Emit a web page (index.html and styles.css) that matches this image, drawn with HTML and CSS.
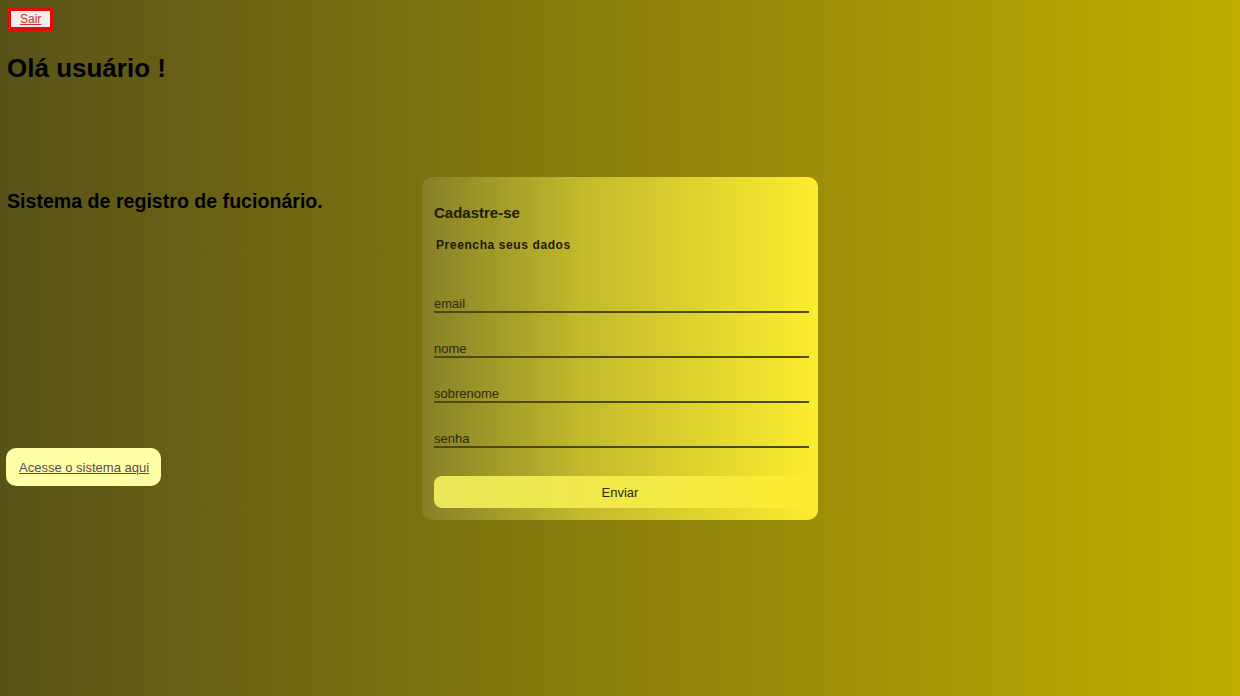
FILE: index.html
```html
<!DOCTYPE html>
<html lang="pt-BR">
<head>
<meta charset="utf-8">
<title>Sistema de registro</title>
<link rel="stylesheet" href="styles.css">
</head>
<body>
<div class="page">
  <div class="side">
    <div class="logout"><a href="#" class="logout-link">Sair</a></div>
    <h2 class="greet">Olá usuário !</h2>
    <h3 class="system">Sistema de registro de fucionário.</h3>
    <div class="access"><a href="#" class="access-link">Acesse o sistema aqui</a></div>
  </div>
  <form class="card">
    <h4 class="card-title">Cadastre-se</h4>
    <p class="card-sub">Preencha seus dados</p>
    <input class="field" type="text" placeholder="email">
    <input class="field" type="text" placeholder="nome">
    <input class="field" type="text" placeholder="sobrenome">
    <input class="field" type="password" placeholder="senha">
    <button class="send" type="button">Enviar</button>
  </form>
</div>
</body>
</html>
```
FILE: styles.css
```css
html, body {
  margin: 0;
  height: 100%;
}
body {
  background: linear-gradient(to right, #585218, #bfae00);
  font-family: "Liberation Sans", Arial, sans-serif;
  color: #000;
}
.page {
  display: grid;
  min-height: 100vh;
  box-sizing: border-box;
  padding: 7px;
}
.side, .card {
  grid-area: 1 / 1;
}
.side {
  display: flex;
  flex-direction: column;
  align-items: flex-start;
}
.logout {
  border: 4px solid #e30c0c;
  background: #f3eeee;
  padding: 0 9px;
  height: 16px;
  display: flex;
  align-items: center;
}
.logout-link {
  color: #d23030;
  font-size: 12px;
  line-height: 16px;
}
.greet {
  font-size: 26px;
  margin: 22px 0 0;
  line-height: 30px;
}
.system {
  font-size: 19.6px;
  margin: 106px 0 0;
  line-height: 24px;
}
.access {
  margin-top: 235px;
  margin-left: -1px;
  background: #ffffa6;
  border-radius: 10px;
  padding: 12px 12px 12px 13px;
  height: 14px;
  display: flex;
  align-items: center;
}
.access-link {
  color: #5b4a64;
  font-size: 13px;
}
.card {
  place-self: center;
  width: 396px;
  height: 343px;
  box-sizing: border-box;
  border-radius: 10px;
  padding: 27px 9px 0 12px;
  background: linear-gradient(to right, #858028, #c2b92c 40%, #e3d82e 75%, #fdec2e);
  display: flex;
  flex-direction: column;
  margin-top: 1px;
}
.card-title {
  margin: 0;
  font-size: 15px;
  line-height: 17px;
  color: #1d1a08;
}
.card-sub {
  margin: 17px 0 0 2px;
  font-size: 12px;
  font-weight: bold;
  letter-spacing: 0.6px;
  color: #1d1a08;
  line-height: 15px;
}
.field {
  width: 375px;
  box-sizing: border-box;
  background: transparent;
  border: none;
  border-bottom: 2px solid #4d4a06;
  padding: 0;
  height: 18px;
  font-family: "Liberation Sans", Arial, sans-serif;
  font-size: 13px;
  color: #2d2a0a;
  outline: none;
  margin-top: 27px;
}
.field:first-of-type {
  margin-top: 42px;
}
.field::placeholder {
  color: #2e2b0c;
}
.send {
  margin-top: 28px;
  width: 372px;
  height: 32px;
  border: none;
  border-radius: 8px;
  background: linear-gradient(to right, #ebe65a, #f2ea45 60%, #fdeb2e);
  font-family: "Liberation Sans", Arial, sans-serif;
  font-size: 13px;
  color: #2b280c;
  padding: 0;
}
```
